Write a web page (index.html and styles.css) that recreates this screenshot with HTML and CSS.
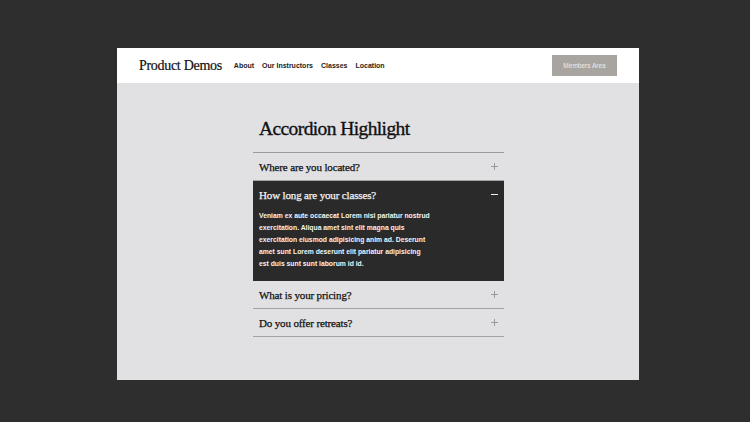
FILE: index.html
```html
<!DOCTYPE html>
<html lang="en">
<head>
    <meta charset="UTF-8">
    <meta name="viewport" content="width=device-width, initial-scale=1.0">
    <title>Product Demos</title>
    <link rel="stylesheet" href="styles.css">
</head>
<body>
    <div class="site-frame">
        <div class="header">
            <div class="header-left">
                <span class="logo">Product Demos</span>
                <nav class="nav">
                    <a href="#">About</a>
                    <a href="#">Our Instructors</a>
                    <a href="#">Classes</a>
                    <a href="#">Location</a>
                </nav>
            </div>
            <a class="members-btn" href="#">Members Area</a>
        </div>
        <div class="content">
            <div class="accordion-block">
                <h1 class="accordion-title">Accordion Highlight</h1>
                <div class="accordion">
                    <div class="acc-item">
                        <div class="acc-head">
                            <span>Where are you located?</span>
                            <span class="acc-icon plus"></span>
                        </div>
                    </div>
                    <div class="acc-item open">
                        <div class="acc-head">
                            <span>How long are your classes?</span>
                            <span class="acc-icon"></span>
                        </div>
                        <div class="acc-body">
                            <p>Veniam ex aute occaecat Lorem nisi pariatur nostrud exercitation. Aliqua amet sint elit magna quis exercitation eiusmod adipisicing anim ad. Deserunt amet sunt Lorem deserunt elit pariatur adipisicing est duis sunt sunt laborum id id.</p>
                        </div>
                    </div>
                    <div class="acc-item">
                        <div class="acc-head">
                            <span>What is your pricing?</span>
                            <span class="acc-icon plus"></span>
                        </div>
                    </div>
                    <div class="acc-item">
                        <div class="acc-head">
                            <span>Do you offer retreats?</span>
                            <span class="acc-icon plus"></span>
                        </div>
                    </div>
                </div>
            </div>
        </div>
    </div>
</body>
</html>
```

FILE: styles.css
```css
/* Page backdrop */
body {
    margin: 0;
    padding: 48px 0 0 117px;
    background-color: #2e2e2e;
    font-family: 'Liberation Sans', Arial, sans-serif;
    color: #1a1a1a;
}

/* White site window */
.site-frame {
    width: 522px;
    height: 332px;
    background-color: #e1e1e3;
    display: flex;
    flex-direction: column;
}

/* Header bar */
.header {
    height: 35px;
    flex-shrink: 0;
    padding: 0 22px;
    background-color: #fff;
    display: flex;
    align-items: center;
    justify-content: space-between;
}

.header-left {
    display: flex;
    align-items: center;
}

.logo {
    font-family: 'Liberation Serif', 'Times New Roman', serif;
    font-size: 14px;
    letter-spacing: -0.3px;
    color: #111;
    -webkit-text-stroke: 0.2px #111;
    margin-right: 12px;
}

.nav {
    display: flex;
    gap: 8px;
}

.nav a {
    font-size: 7px;
    font-weight: bold;
    color: #222;
    text-decoration: none;
}

.members-btn {
    width: 65px;
    height: 21px;
    background-color: #a8a5a1;
    color: #eeece9;
    font-size: 6.5px;
    text-decoration: none;
    display: flex;
    align-items: center;
    justify-content: center;
}

/* Main area */
.content {
    flex-grow: 1;
    display: flex;
    justify-content: center;
}

.accordion-block {
    width: 251px;
    margin-left: 1px;
    padding-top: 34px;
}

.accordion-title {
    font-family: 'Liberation Serif', 'Times New Roman', serif;
    font-weight: normal;
    font-size: 19.5px;
    letter-spacing: -0.6px;
    line-height: 24px;
    margin: 0 0 11px;
    padding-left: 6px;
    color: #111;
    -webkit-text-stroke: 0.35px #111;
}

.accordion {
    border-top: 1px solid #9c9c9c;
}

.acc-item {
    border-bottom: 1px solid #a3a3a3;
}

.acc-item.open {
    background-color: #2a2a2a;
    color: #f2f2f2;
    border-bottom: none;
}

.acc-head {
    height: 27px;
    padding: 0 6px;
    display: flex;
    align-items: center;
    justify-content: space-between;
    font-family: 'Liberation Serif', 'Times New Roman', serif;
    font-size: 11px;
    letter-spacing: -0.15px;
    color: #111;
    -webkit-text-stroke: 0.25px currentColor;
}

.open .acc-head {
    color: #f2f2f2;
}

.acc-icon {
    width: 7px;
    height: 7px;
    position: relative;
    -webkit-text-stroke: 0;
}

.acc-icon::before,
.acc-icon.plus::after {
    content: '';
    position: absolute;
    background-color: currentColor;
}

.acc-icon::before {
    left: 0;
    right: 0;
    top: 3px;
    height: 1px;
}

.acc-icon.plus::after {
    top: 0;
    bottom: 0;
    left: 3px;
    width: 1px;
}

.acc-item .plus {
    color: #9a9a9a;
}

.acc-body {
    padding: 2px 6px 11px;
}

.acc-body p {
    margin: 0;
    width: 172px;
    font-size: 6.8px;
    font-weight: bold;
    line-height: 12px;
    color: #f4f4f4;
}
```
